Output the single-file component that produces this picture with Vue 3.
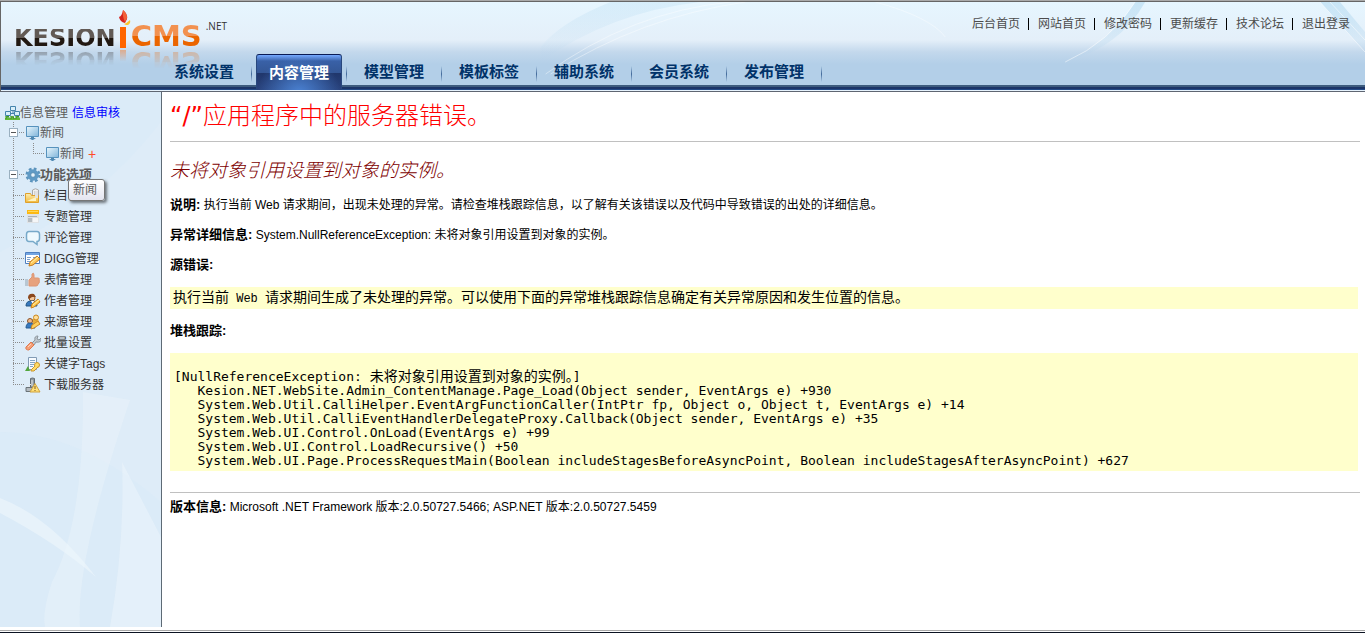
<script setup>
import { ref } from 'vue'

const topLinks = ['后台首页', '网站首页', '修改密码', '更新缓存', '技术论坛', '退出登录']
const tabs = ['系统设置', '内容管理', '模型管理', '模板标签', '辅助系统', '会员系统', '发布管理']
const activeTab = ref('内容管理')
const options = [
  { icon: 'column', label: '栏目管理' },
  { icon: 'topic', label: '专题管理' },
  { icon: 'comment', label: '评论管理' },
  { icon: 'digg', label: 'DIGG管理' },
  { icon: 'thumb', label: '表情管理' },
  { icon: 'author', label: '作者管理' },
  { icon: 'source', label: '来源管理' },
  { icon: 'wrench', label: '批量设置' },
  { icon: 'tags', label: '关键字Tags' },
  { icon: 'server', label: '下载服务器' },
]
const frames = [
  'Kesion.NET.WebSite.Admin_ContentManage.Page_Load(Object sender, EventArgs e) +930',
  'System.Web.Util.CalliHelper.EventArgFunctionCaller(IntPtr fp, Object o, Object t, EventArgs e) +14',
  'System.Web.Util.CalliEventHandlerDelegateProxy.Callback(Object sender, EventArgs e) +35',
  'System.Web.UI.Control.OnLoad(EventArgs e) +99',
  'System.Web.UI.Control.LoadRecursive() +50',
  'System.Web.UI.Page.ProcessRequestMain(Boolean includeStagesBeforeAsyncPoint, Boolean includeStagesAfterAsyncPoint) +627',
]
const trace = frames.map((f) => '   ' + f).join('\n')
</script>

<template>
  <div class="page">
    <svg class="defs" aria-hidden="true">
      <defs>
        <linearGradient id="screen" x1="0" y1="0" x2="1" y2="1">
          <stop offset="0" stop-color="#e9f7fd" /><stop offset="1" stop-color="#7fb4da" />
        </linearGradient>
        <linearGradient id="gold" x1="0" y1="0" x2="0" y2="1">
          <stop offset="0" stop-color="#fdeeb0" /><stop offset="1" stop-color="#f0b83a" />
        </linearGradient>
      </defs>
      <symbol id="network" viewBox="0 0 16 16">
        <path d="M0 13h15v2H0z" fill="#63b83a" /><path d="M1 14v-3l1 2 1-3 1 3M6 14v-3l1 2 1-2 1 3M11 14v-3l1 2 1-3 1 3" stroke="#3f9a1e" fill="none" />
        <path d="M5.500 1.500h5v4h-5z" fill="#d9effa" stroke="#4584ad" /><path d="M8 6v2.500M3 8.500h10" stroke="#4584ad" />
        <path d="M.5 6.500h5v4h-5zM9.500 6.500h5v4h-5z" fill="#d9effa" stroke="#4584ad" />
      </symbol>
      <symbol id="monitor" viewBox="0 0 16 16">
        <path d="M1.500 1.500h12v10h-12z" fill="url(#screen)" stroke="#5692bd" /><path d="M6 12h3v1h2l-3 2H7l-3-2h2z" fill="#4f88b2" />
      </symbol>
      <symbol id="gear" viewBox="0 0 16 16">
        <circle cx="8" cy="8" r="6.300" fill="none" stroke="#5b93bc" stroke-width="2.400" stroke-dasharray="2.700 2.248" />
        <circle cx="8" cy="8" r="4" fill="none" stroke="#5f9ac5" stroke-width="3.500" /><circle cx="8" cy="8" r="2.300" fill="#e7f3fb" stroke="#4c83aa" stroke-width=".8" />
      </symbol>
      <symbol id="column" viewBox="0 0 16 16">
        <path d="M7.500 2q3-2.500 6 0v9h-6z" fill="#f2f2f2" stroke="#a8a8a8" /><path d="M10.500 3v7" stroke="#b5b5b5" stroke-width="2" />
        <path d="M.5 5.500h5l1 2h7v7H.5z" fill="url(#gold)" stroke="#dfa02c" /><path d="M2 13l9-4v4z" fill="#fff2c1" /><path d="M10 3h3v7h-3z" fill="#e3e3e3" />
      </symbol>
      <symbol id="topic" viewBox="0 0 16 16">
        <path d="M2 5h12v9H2z" fill="#dfe2e5" /><path d="M2 1h12v4H2z" fill="#fcb913" /><path d="M3 2.500h10" stroke="#ffd95e" />
        <path d="M3 7.500h9" stroke="#aab1b6" /><path d="M3 9h4v4H3z" fill="#b6bdc2" /><path d="M8 9h5v4H8z" fill="#f5f6f7" />
      </symbol>
      <symbol id="comment" viewBox="0 0 16 16">
        <path d="M4 1.500h8q2.500 0 2.500 3v4q0 3-2.500 3v3l-4-3H4q-2.500 0-2.500-3v-4q0-3 2.500-3z" fill="#eef9fe" stroke="#77a9c9" stroke-width="1.500" />
      </symbol>
      <symbol id="digg" viewBox="0 0 16 16">
        <path d="M.5 1.500h14v11H.5z" fill="#fff" stroke="#4f7fc0" /><path d="M1 2h13v2H1z" fill="#73a5e2" />
        <path d="M2 6.500h4M2 8.500h3M2 10.500h3M8 6.500h4" stroke="#7c9fcb" /><path d="M4 15l1-4 7-6 3 3-7 6z" fill="#ffc95a" stroke="#c67d1f" /><path d="M6 12l7-6" stroke="#fff0a8" />
      </symbol>
      <symbol id="thumb" viewBox="0 0 16 16">
        <path d="M4 8l3-3V2q2-2 2 1v3h4q2 0 1 2 1 1 0 2 1 1-1 2 0 2-2 2H4z" fill="#e7a27e" stroke="#dd9674" /><path d="M0 7h3v7H0z" fill="#b8c7d3" />
      </symbol>
      <symbol id="author" viewBox="0 0 16 16">
        <circle cx="7" cy="5" r="3" fill="#f2c69b" stroke="#93541f" /><path d="M3 5q0-5 6-4l2 3-4 0-3 2z" fill="#8b471d" /><path d="M1 13q0-5 5-5h3q3 1 3 5z" fill="#3878bd" stroke="#205785" />
        <path d="M6 8l2 3 1-3" fill="#fff" /><path d="M6 15l1-4 6-5 2 3-6 5z" fill="#ffc84c" stroke="#ca811e" /><path d="M8 12l6-5" stroke="#fff0a8" />
      </symbol>
      <symbol id="source" viewBox="0 0 16 16">
        <path d="M7 5h6l2 6H8z" fill="#e8ad37" /><circle cx="11" cy="3.500" r="2.500" fill="#ffdf9a" stroke="#c98720" /><circle cx="5" cy="7" r="2.500" fill="#eeb98b" stroke="#8d5428" />
        <path d="M1 14q0-5 4-5 4 0 5 5z" fill="#397ac0" stroke="#275d94" /><path d="M6 15l1-4 6-4 2 3-6 4z" fill="#ffd05b" stroke="#c9882b" />
      </symbol>
      <symbol id="wrench" viewBox="0 0 16 16">
        <path d="M7 8l3-3q-1-4 3-4l-1 3 2 1 2-2q1 5-5 4L9 10z" fill="#c0c8cf" stroke="#8c969e" /><path d="M1 12l5-5 3 3-5 5q-4 0-3-3z" fill="#f5a079" stroke="#df794e" /><path d="M3 12l3-3" stroke="#ffd0b7" />
      </symbol>
      <symbol id="tags" viewBox="0 0 16 16">
        <path d="M3.500 1.500h8v12h-8z" fill="#f7fbff" stroke="#829bb5" /><path d="M5 4.500h5M5 6.500h5M5 8.500h4M5 10.500h3" stroke="#84a7c4" /><path d="M0 15l3-5 2 5z" fill="#52a63c" />
        <circle cx="12" cy="9" r="2.500" fill="#ffdd68" stroke="#c9952b" /><path d="M10 10l-4 4v1h3l4-4" fill="#ffdd68" stroke="#c9952b" />
      </symbol>
      <symbol id="server" viewBox="0 0 16 16">
        <path d="M5.500 1.500q2-1 4 0v9h-4z" fill="#909aa1" stroke="#626b71" /><path d="M1 10.500h9v4H1z" fill="#b4bbc0" stroke="#697278" /><path d="M7 3v6M3 10l3-3" stroke="#e6e9eb" />
        <path d="M10 6.500l5 8.500H5z" fill="#ffe078" stroke="#d0a13a" /><path d="M10 9v3M10 13v1" stroke="#82581c" />
      </symbol>
    </svg>

    <header class="header">
      <svg class="swoosh" viewBox="0 0 1365 83" preserveAspectRatio="none" aria-hidden="true">
        <defs>
          <linearGradient id="veil" x1="0" y1="0" x2="0" y2="1">
            <stop offset="0" stop-color="#b4daf0" stop-opacity=".6" /><stop offset="1" stop-color="#a5cdea" stop-opacity="0" />
          </linearGradient>
        </defs>
        <path d="M540 60Q610 10 700 0H610Q560 20 540 45z" fill="url(#veil)" opacity=".5" />
        <path d="M545 72Q630 10 730 0M550 72Q640 15 745 0M875 0Q930 15 945 35" fill="none" stroke="#fff" opacity=".4" />
        <path d="M1065 60Q1110 40 1135 0H1320L1365 50V30L1340 0H1145Q1120 45 1065 60z" fill="url(#veil)" />
        <path d="M1065 60Q1110 40 1135 0M1320 0L1365 50M1330 0L1365 38" fill="none" stroke="#fff" opacity=".5" />
      </svg>
      <div class="brand-row">
        <h1 class="logo">
          <span class="logo-name">KESION</span>
          <svg class="flame" viewBox="0 0 12 38" aria-hidden="true">
            <path d="M4 0q5 4 4 9l-2 4Q1 12 0 7q3-1 4-7z" fill="#d6231d" /><path d="M4 0q-1 6 2 12l2-4q0-5-4-8z" fill="#f26138" />
            <path d="M5 14q3-1 6-4 1 3-2 5H7z" fill="#fcc52d" /><path d="M1 17h6v21H1z" fill="#ff6500" />
          </svg>
          <span class="logo-cms">CMS</span>
          <small class="logo-net">.NET</small>
        </h1>
        <nav class="top-links" aria-label="快捷链接">
          <a v-for="link in topLinks" :key="link" href="#">{{ link }}</a>
        </nav>
      </div>
      <nav class="tabs" aria-label="主菜单">
        <div v-for="tab in tabs" :key="tab" class="tab-cell">
          <button type="button" class="tab" :class="{ active: tab === activeTab }" @click="activeTab = tab">{{ tab }}</button>
        </div>
      </nav>
    </header>

    <div class="body">
      <aside class="sidebar">
        <svg class="waves" viewBox="0 0 161 535" preserveAspectRatio="none" aria-hidden="true">
          <path d="M161 30Q100 110 0 160V340Q80 340 161 410z" fill="#e4effa" opacity=".3" />
          <path d="M83 300Q84 430 52 490Q42 520 45 535H80Q75 470 130 308z" fill="#edf5fb" opacity=".4" />
          <path d="M0 406Q50 425 96 485Q55 450 0 421z" fill="#eef7fc" opacity=".6" />
          <path d="M122 370Q125 450 110 535H161V445z" fill="#edf5fc" opacity=".5" />
        </svg>
        <div class="tree-head">
          <svg class="icon"><use href="#network" /></svg>
          <a href="#">信息管理</a>
          <a href="#" class="review">信息审核</a>
        </div>
        <ul class="tree">
          <li class="node">
            <button type="button" class="toggle" aria-label="折叠新闻"></button>
            <svg class="icon"><use href="#monitor" /></svg><a href="#">新闻</a>
          </li>
          <li class="node child">
            <svg class="icon"><use href="#monitor" /></svg><a href="#">新闻</a>
            <a href="#" class="plus">+</a>
            <span class="tooltip" role="tooltip">新闻</span>
          </li>
          <li class="node">
            <button type="button" class="toggle" aria-label="折叠功能选项"></button>
            <svg class="icon"><use href="#gear" /></svg><a href="#" class="group">功能选项</a>
          </li>
          <li v-for="o in options" :key="o.icon" class="node leaf">
            <svg class="icon"><use :href="'#' + o.icon" /></svg><a href="#">{{ o.label }}</a>
          </li>
        </ul>
      </aside>

      <main class="main">
        <h2 class="title"><span class="quote">“/”</span>应用程序中的服务器错误。</h2>
        <hr />
        <h3 class="subtitle">未将对象引用设置到对象的实例。</h3>
        <p><b>说明:</b> 执行当前 Web 请求期间，出现未处理的异常。请检查堆栈跟踪信息，以了解有关该错误以及代码中导致错误的出处的详细信息。</p>
        <p><b>异常详细信息:</b> System.NullReferenceException: 未将对象引用设置到对象的实例。</p>
        <p><b>源错误:</b></p>
        <div class="code source">执行当前<code> Web </code>请求期间生成了未处理的异常。可以使用下面的异常堆栈跟踪信息确定有关异常原因和发生位置的信息。</div>
        <p><b>堆栈跟踪:</b></p>
        <pre class="code stack">[NullReferenceException: <span class="han">未将对象引用设置到对象的实例。</span>]
{{ trace }}</pre>
        <hr />
        <p class="version"><b>版本信息:</b> Microsoft .NET Framework 版本:2.0.50727.5466; ASP.NET 版本:2.0.50727.5459</p>
      </main>
    </div>
    <footer class="footer"></footer>
  </div>
</template>

<style>
body {
  background: #fff;
}
</style>

<style scoped>
* {
  box-sizing: border-box;
}
.page {
  display: flex;
  flex-direction: column;
  min-height: 100vh;
  font: 12px/20px "Liberation Sans", "Noto Sans CJK SC", sans-serif;
  color: #000;
}
.defs {
  position: absolute;
  width: 0;
  height: 0;
}
a {
  color: inherit;
  text-decoration: none;
}
button {
  font: inherit;
  padding: 0;
  border: 0;
  cursor: pointer;
}

.header {
  position: relative;
  display: flex;
  flex-direction: column;
  border-top: 2px solid #666;
  border-left: 1px solid #666;
  border-bottom: 1px solid #5f6672;
  background:
    linear-gradient(#3d5c7e 0 2px, #1b3568 2px 4px, #234a86 4px 5px, #e6f2fc 5px) bottom / 100% 6px no-repeat,
    linear-gradient(#e6f6ff, #e4eff9 38px, #c3d8ec 50px, #b3cfe8 62px);
}
.header::before {
  content: "";
  position: absolute;
  top: -2px;
  left: -1px;
  right: 0;
  height: 1px;
  background: #aaa;
}
.swoosh {
  position: absolute;
  top: 0;
  left: 0;
  width: 100%;
  height: 83px;
}
.brand-row {
  position: relative;
  display: flex;
  justify-content: space-between;
  height: 52px;
}
.logo {
  display: flex;
  align-items: flex-end;
  margin: 0 0 7px 13px;
  font-family: "DejaVu Sans", sans-serif;
  font-weight: bold;
}
.logo-name,
.logo-cms {
  color: transparent;
  background-clip: text;
  -webkit-box-reflect: below 4px linear-gradient(transparent 20%, rgba(0, 0, 0, 0.3));
}
.logo-name {
  font-size: 24px;
  line-height: 18px;
  background-image: linear-gradient(#625a55 0 50%, #211812 50%);
}
.logo-cms {
  font-size: 29px;
  line-height: 22px;
  background-image: linear-gradient(#f29150 0 50%, #eb6500 50%);
}
.flame {
  width: 12px;
  height: 38px;
  margin: 0 0 -1px 3px;
  -webkit-box-reflect: below 2px linear-gradient(transparent 70%, rgba(0, 0, 0, 0.4));
}
.logo-net {
  align-self: flex-start;
  margin: 16px 0 0 4px;
  font: 10px/16px "Open Sans", sans-serif;
  color: #333;
}
.top-links {
  display: flex;
  align-items: center;
  height: 43px;
  margin-right: 7px;
  color: #4c4c4c;
}
.top-links a {
  padding: 0 8px 0 9px;
  line-height: 12px;
  border-left: 1px solid #000;
}
.top-links a:first-child {
  border-left-color: transparent;
}
.tabs {
  position: relative;
  display: flex;
  height: 37px;
  margin-left: 156px;
}
.tab-cell {
  width: 95px;
  padding: 0 5px 0 4px;
  background: linear-gradient(rgba(60, 100, 150, 0), #41699a, rgba(60, 100, 150, 0)) right 12px / 1px 16px no-repeat;
  background-position: right 0 top 12px;
}
.tab {
  width: 100%;
  height: 36px;
  font-size: 15px;
  font-weight: bold;
  color: #003269;
  background: none;
}
.tab.active {
  color: #fff;
  border: 1px solid #28477d;
  border-top-color: #0a1b55;
  border-bottom: 0;
  border-radius: 3px 3px 0 0;
  background:
    linear-gradient(#75a9ff, rgba(80, 130, 220, 0) 6px),
    radial-gradient(ellipse at 50% 110%, #4b83d4, rgba(55, 100, 180, 0) 70%),
    linear-gradient(#3c66b0, #345796 50%, #20366b 51%, #29437d);
}

.body {
  display: flex;
  flex: 1;
}
.sidebar {
  position: relative;
  width: 162px;
  flex: none;
  padding: 12px 0 0 5px;
  color: #5a5a5a;
  background: #dbebf8;
  border-right: 1px solid #5d6a75;
}
.waves {
  position: absolute;
  inset: 0;
  width: 100%;
  height: 100%;
}
.icon {
  width: 16px;
  height: 16px;
  flex: none;
}
.tree-head {
  position: relative;
  display: flex;
  align-items: center;
  height: 18px;
}
.tree-head .icon {
  margin-right: -1px;
}
.review {
  margin-left: 4px;
  color: #00f;
}
.tree {
  position: relative;
  margin: 0;
  padding: 0;
  list-style: none;
}
.tree::before {
  content: "";
  position: absolute;
  left: 8px;
  top: 0;
  bottom: 10px;
  width: 1px;
  background: repeating-linear-gradient(#8b8b8b 0 1px, transparent 1px 2px);
}
.node {
  position: relative;
  display: flex;
  align-items: center;
  height: 21px;
  padding-left: 4px;
}
.node .icon {
  margin-right: -1px;
}
.toggle {
  width: 9px;
  height: 9px;
  border: 1px solid #9ab0c0;
  background: linear-gradient(#555, #555) center / 5px 1px no-repeat #fff;
}
.toggle + .icon {
  margin-left: 7px;
}
.node::before {
  content: "";
  position: absolute;
  left: 14px;
  top: 10px;
  width: 6px;
  height: 1px;
  background: repeating-linear-gradient(90deg, #8b8b8b 0 1px, transparent 1px 2px);
}
.leaf {
  padding-left: 20px;
  color: #333;
}
.leaf::before {
  left: 8px;
  width: 12px;
}
.leaf .icon {
  margin-right: 3px;
}
.child {
  padding-left: 40px;
}
.child::before {
  left: 28px;
  top: 0;
  width: 12px;
  height: 11px;
  background:
    repeating-linear-gradient(#8b8b8b 0 1px, transparent 1px 2px) left / 1px 100% no-repeat,
    repeating-linear-gradient(90deg, #8b8b8b 0 1px, transparent 1px 2px) bottom / 100% 1px no-repeat;
}
.plus {
  margin-left: 4px;
  font-size: 14px;
  color: #ff4a2a;
}
.group {
  font-size: 13px;
  font-weight: bold;
}
.tooltip {
  position: absolute;
  left: 63px;
  top: 36px;
  z-index: 2;
  padding: 0 7px 0 4px;
  border: 1px solid #767676;
  border-radius: 3px;
  background: linear-gradient(#fff, #e4e5f0);
  box-shadow: 2px 2px 3px rgba(0, 0, 0, 0.5);
}

.main {
  flex: 1;
  min-width: 0;
  padding: 8px 5px 0 8px;
}
hr {
  height: 1px;
  margin: 0;
  border: 0;
  background: silver;
}
.title {
  margin: 0 0 9px;
  font-size: 24px;
  line-height: 32px;
  font-weight: 300;
  color: #f00;
}
.quote {
  font-family: "DejaVu Sans", sans-serif;
  font-weight: 400;
}
.subtitle {
  margin: 16px 0 12px;
  font-size: 19px;
  line-height: 25px;
  font-weight: 300;
  font-style: italic;
  color: #800000;
}
p {
  margin: 0 0 10px;
}
p b {
  font-size: 13px;
}
.code {
  margin-right: 2px;
  background: #ffffcc;
}
.source {
  margin: 12px 2px 12px 0;
  padding: 0 3px;
  font-size: 14px;
}
code {
  font: 12px/20px "Liberation Mono", monospace;
}
.stack {
  margin: 12px 2px 21px 0;
  padding: 16px 4px 3px;
  font: 13px/14px "DejaVu Sans Mono", "Noto Sans CJK SC", monospace;
  overflow: hidden;
}
.han {
  font-size: 14px;
}
.version {
  margin: 4px 0 0;
}
.footer {
  height: 6px;
  background: linear-gradient(#fff 0 3px, #a9a9a9 3px 4px, #fff 4px 5px, #0b1322 5px);
}
</style>
